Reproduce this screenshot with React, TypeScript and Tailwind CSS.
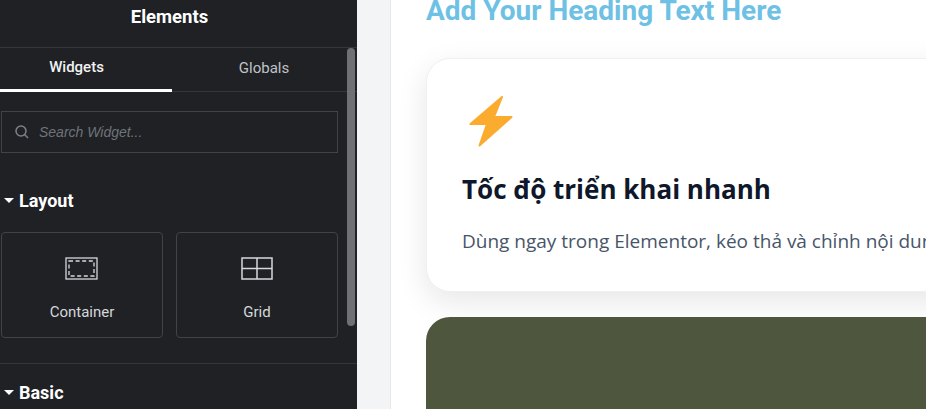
import React from 'react';

const ContainerIcon = () => (
  <svg width="34" height="24" viewBox="0 0 34 24" fill="none" stroke="#d5d8dc">
    <rect x="1" y="1" width="31" height="21" strokeWidth="1.3" />
    <rect x="4" y="4" width="25" height="15" strokeWidth="1.3" strokeDasharray="4 2.6" />
  </svg>
);

const GridIcon = () => (
  <svg width="32" height="24" viewBox="0 0 32 24" fill="none" stroke="#d5d8dc" strokeWidth="1.5">
    <rect x="1" y="1" width="30" height="21" />
    <path d="M16 1v21M1 11.5h30" />
  </svg>
);

const Bolt = () => (
  <svg width="50" height="54" viewBox="0 0 50 54">
    <path
      d="M36 2 4.5 29 21 29 13.5 50.5 45.5 22 28 22Z"
      fill="#fbab2e"
      stroke="#fbab2e"
      strokeWidth="2"
      strokeLinejoin="round"
    />
  </svg>
);

const Caret = () => <span className="w-0 h-0 border-x-[5px] border-x-transparent border-t-[5px] border-t-white ml-[4px] mr-[5px]" />;

const Tile = ({ label, icon }: { label: string; icon: React.ReactNode }) => (
  <div className="w-[162px] h-[106px] border border-[#3f444b] rounded-[4px] flex flex-col items-center pt-[24px]">
    <div className="h-[24px] flex items-center">{icon}</div>
    <span className="mt-[21px] text-[15px] leading-[20px] text-[#d5d8dc]">{label}</span>
  </div>
);

const Sidebar = () => (
  <aside className="relative w-[357px] shrink-0 h-full bg-[#1f2124] font-['Roboto',sans-serif] overflow-hidden">
    <div className="h-[48px] border-b border-[#33373d] flex justify-center pt-[5px] pr-[18px]">
      <h1 className="text-[18.5px] leading-[24px] font-bold text-white">Elements</h1>
    </div>
    <div className="flex h-[44px] border-b border-[#33373d] text-[15px] font-medium">
      <div className="w-[172px] h-[44px] pb-[3px] pr-[19px] border-b-[3px] border-white flex items-center justify-center text-[#f1f2f3]">
        Widgets
      </div>
      <div className="w-[184px] flex items-center justify-center pb-[3px] text-[#bfc3c8] font-normal">Globals</div>
    </div>
    <div className="ml-[1px] mt-[19px] w-[337px] h-[42px] border border-[#3f444b] flex items-center pl-[13px] gap-[10px]">
      <svg width="14" height="14" viewBox="0 0 14 14" fill="none" stroke="#7d828a" strokeWidth="1.5">
        <circle cx="6" cy="6" r="5" />
        <path d="M9.8 9.8 13 13" />
      </svg>
      <span className="italic text-[14px] leading-[20px] mb-[1px] text-[#6f747b] font-['Liberation_Sans',sans-serif]">Search Widget...</span>
    </div>
    <div className="mt-[37px] flex items-center h-[20px]">
      <Caret />
      <span className="text-[18px] font-bold text-white">Layout</span>
    </div>
    <div className="ml-[1px] mt-[22px] flex gap-[13px]">
      <Tile label="Container" icon={<ContainerIcon />} />
      <Tile label="Grid" icon={<GridIcon />} />
    </div>
    <div className="mt-[25px] border-t border-[#33373d] pt-[18px] flex items-center h-[39px]">
      <Caret />
      <span className="text-[18px] font-bold text-white">Basic</span>
    </div>
    <div className="absolute left-[347px] top-[48px] w-[8px] h-[278px] rounded-[4px] bg-[#6e7073]" />
  </aside>
);

const Preview = () => (
  <main className="flex-1 min-w-0 h-full bg-[#f3f4f6] pl-[33px] overflow-hidden">
    <div className="h-full bg-white border-l border-[#e6e8eb] pl-[35px] overflow-hidden">
      <h2 className="mt-[-7px] h-[36px] text-[28px] leading-[36px] font-bold text-[#6ec1e4] font-['Roboto',sans-serif] whitespace-nowrap">
        Add Your Heading Text Here
      </h2>
      <section className="mt-[29px] w-[720px] h-[234px] rounded-[24px] bg-white border border-[#eef0f2] shadow-[0_10px_30px_rgba(17,24,39,0.1)] pl-[35px] pt-[36px] font-['Open_Sans',sans-serif] whitespace-nowrap">
        <div className="pl-[4px]">
          <Bolt />
        </div>
        <h3 className="mt-[22px] text-[26px] leading-[36px] font-bold text-[#0f172a]">Tốc độ triển khai nhanh</h3>
        <p className="mt-[21px] text-[19px] leading-[26px] text-[#475569]">
          Dùng ngay trong Elementor, kéo thả và chỉnh nội dung dễ dàng
        </p>
      </section>
      <section className="mt-[25px] w-[720px] h-[200px] rounded-[24px] bg-[#4f563e]" />
    </div>
  </main>
);

export default function App() {
  return (
    <div className="w-[926px] h-[409px] flex overflow-hidden">
      <Sidebar />
      <Preview />
    </div>
  );
}
